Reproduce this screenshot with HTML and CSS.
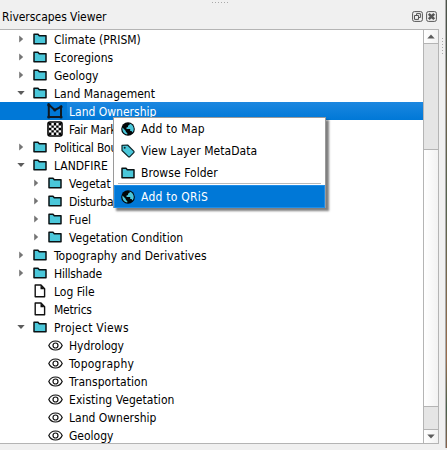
FILE: index.html
```
<!DOCTYPE html>
<html lang="en">
<head>
<meta charset="utf-8">
<title>Riverscapes Viewer</title>
<link rel="stylesheet" href="styles.css">
</head>
<body>
<svg class="defs" aria-hidden="true">
  <symbol id="folder" viewBox="0 0 14 12"><path d="M1 1.2H5L6.3 2.7H13V10.8H1Z" fill="#4ac7da" stroke="#0a1214" stroke-width="1.5" stroke-linejoin="round"/></symbol>
  <symbol id="right" viewBox="0 0 8 8"><path d="M2.2.5L6.2 4L2.2 7.5Z" fill="#757575"/></symbol>
  <symbol id="down" viewBox="0 0 8 5"><path d="M.3.5H7.7L4 4.5Z" fill="#5c5c5c"/></symbol>
  <symbol id="poly" viewBox="0 0 16 16"><path d="M1.8 1.8L7.8 7L14 3.8V14H1.8Z" fill="none" stroke="#101820" stroke-width="2"/><g fill="#101820"><circle cx="1.8" cy="1.9" r="1.6"/><circle cx="14" cy="3.8" r="1.6"/><circle cx="14" cy="14" r="1.6"/><circle cx="1.8" cy="14" r="1.6"/><circle cx="7.8" cy="7" r="1.5"/></g></symbol>
  <symbol id="raster" viewBox="0 0 16 16"><rect x="1" y="1" width="14" height="14" rx="2" fill="#fff" stroke="#000" stroke-width="1.6"/><path d="M2 2h2.4v2.4H2zM6.8 2h2.4v2.4H6.8zM11.6 2H14v2.4h-2.4zM4.4 4.4h2.4v2.4H4.4zM9.2 4.4h2.4v2.4H9.2zM2 6.8h2.4v2.4H2zM6.8 6.8h2.4v2.4H6.8zM11.6 6.8H14v2.4h-2.4zM4.4 9.2h2.4v2.4H4.4zM9.2 9.2h2.4v2.4H9.2zM2 11.6h2.4V14H2zM6.8 11.6h2.4V14H6.8zM11.6 11.6H14V14h-2.4z"/></symbol>
  <symbol id="file" viewBox="0 0 12 14"><path d="M1.2 1H7L10.6 4.7V12.8H1.2Z" fill="#fff" stroke="#111" stroke-width="1.4" stroke-linejoin="round"/><path d="M6.5 1V5.2H10.7Z" fill="#111"/></symbol>
  <symbol id="eye" viewBox="0 0 15 11"><path d="M.8 5.5C3.4-.5 11.6-.5 14.2 5.5C11.6 11.5 3.4 11.5.8 5.5Z" fill="none" stroke="#111" stroke-width="1.2"/><circle cx="7.5" cy="5.5" r="2.5" fill="none" stroke="#111" stroke-width="1.2"/></symbol>
  <symbol id="globe" viewBox="0 0 14 14"><circle cx="7" cy="7" r="6.8" fill="#020608"/><path d="M8.6 1.5L8.8 2.6L7 3.7V5L5.5 5.6V7H9.2V9H10.5L11.6 10.6C13 8.7 13.1 6.3 12 4.3C11.2 2.9 10 1.9 8.6 1.5ZM1.5 5.6L4.8 8.9V10L6.3 11V12.6C3 12.2.8 9 1.5 5.6Z" fill="#4ac7da"/></symbol>
  <symbol id="tag" viewBox="0 0 14 14"><path d="M1 1.3L6.6 1L13 7.4V8.3L8.6 12.9H7.6L1 6.5Z" fill="#4ac7da" stroke="#0c2428" stroke-width="1.2" stroke-linejoin="round"/><circle cx="3.7" cy="3.8" r="1" fill="#0c2428"/></symbol>
</svg>
<main class="window">
  <section class="dock">
    <header class="title"><h1>Riverscapes Viewer</h1>
      <svg class="btn" viewBox="0 0 11 11"><rect x=".6" y=".6" width="9.8" height="9.8" rx="1.8"/><path d="M4.6 4.4V2.6H8.4V6.5H6.6M2.5 4.5H6.5V8.4H2.5Z"/></svg>
      <svg class="btn" viewBox="0 0 11 11"><rect x=".6" y=".6" width="9.8" height="9.8" rx="1.8"/><path class="cross" d="M2.8 2.8L8.2 8.2M8.2 2.8L2.8 8.2"/></svg>
    </header>
    <div class="panel">
      <ul class="tree">
        <li><svg class="arrow"><use href="#right"/></svg><svg class="folder"><use href="#folder"/></svg><span>Climate (PRISM)</span></li>
        <li><svg class="arrow"><use href="#right"/></svg><svg class="folder"><use href="#folder"/></svg><span>Ecoregions</span></li>
        <li><svg class="arrow"><use href="#right"/></svg><svg class="folder"><use href="#folder"/></svg><span>Geology</span></li>
        <li><svg class="arrow"><use href="#down"/></svg><svg class="folder"><use href="#folder"/></svg><span>Land Management</span></li>
        <li class="child selected"><i class="arrow"></i><svg class="layer"><use href="#poly"/></svg><span>Land Ownership</span></li>
        <li class="child"><i class="arrow"></i><svg class="layer"><use href="#raster"/></svg><span class="tight">Fair Mark</span></li>
        <li><svg class="arrow"><use href="#right"/></svg><svg class="folder"><use href="#folder"/></svg><span class="tight">Political Bou</span></li>
        <li><svg class="arrow"><use href="#down"/></svg><svg class="folder"><use href="#folder"/></svg><span>LANDFIRE</span></li>
        <li class="child"><svg class="arrow"><use href="#right"/></svg><svg class="folder"><use href="#folder"/></svg><span>Vegetat</span></li>
        <li class="child"><svg class="arrow"><use href="#right"/></svg><svg class="folder"><use href="#folder"/></svg><span class="tight">Disturba</span></li>
        <li class="child"><svg class="arrow"><use href="#right"/></svg><svg class="folder"><use href="#folder"/></svg><span>Fuel</span></li>
        <li class="child"><svg class="arrow"><use href="#right"/></svg><svg class="folder"><use href="#folder"/></svg><span class="wide">Vegetation Condition</span></li>
        <li><svg class="arrow"><use href="#right"/></svg><svg class="folder"><use href="#folder"/></svg><span class="wide">Topography and Derivatives</span></li>
        <li><svg class="arrow"><use href="#right"/></svg><svg class="folder"><use href="#folder"/></svg><span class="tight">Hillshade</span></li>
        <li><i class="arrow"></i><svg class="file"><use href="#file"/></svg><span>Log File</span></li>
        <li><i class="arrow"></i><svg class="file"><use href="#file"/></svg><span class="tight">Metrics</span></li>
        <li><svg class="arrow"><use href="#down"/></svg><svg class="folder"><use href="#folder"/></svg><span class="views">Project Views</span></li>
        <li class="child"><i class="arrow"></i><svg class="eye"><use href="#eye"/></svg><span>Hydrology</span></li>
        <li class="child"><i class="arrow"></i><svg class="eye"><use href="#eye"/></svg><span class="views">Topography</span></li>
        <li class="child"><i class="arrow"></i><svg class="eye"><use href="#eye"/></svg><span class="wide">Transportation</span></li>
        <li class="child"><i class="arrow"></i><svg class="eye"><use href="#eye"/></svg><span class="wide">Existing Vegetation</span></li>
        <li class="child"><i class="arrow"></i><svg class="eye"><use href="#eye"/></svg><span>Land Ownership</span></li>
        <li class="child"><i class="arrow"></i><svg class="eye"><use href="#eye"/></svg><span>Geology</span></li>
      </ul>
      <div class="scrollbar">
        <div class="step"><svg class="flip"><use href="#down"/></svg></div>
        <div class="track"><div class="thumb"></div></div>
        <div class="step end"><svg><use href="#down"/></svg></div>
      </div>
    </div>
  </section>
  <div class="splitter"></div>
  <div class="canvas-edge"></div>
  <div class="handle"></div>
  <div class="menu">
    <div class="entry"><svg class="round"><use href="#globe"/></svg><span class="views">Add to Map</span></div>
    <div class="entry"><svg class="round"><use href="#tag"/></svg><span class="wide">View Layer MetaData</span></div>
    <div class="entry"><svg class="folder"><use href="#folder"/></svg><span class="wide">Browse Folder</span></div>
    <hr>
    <div class="entry active"><svg class="round"><use href="#globe"/></svg><span class="views">Add to QRiS</span></div>
  </div>
</main>
</body>
</html>
```
FILE: styles.css
```
* { box-sizing: border-box; }
body { margin: 0; background: #f0f0f0; color: #000; font: 12px/18px "DejaVu Sans Condensed", "DejaVu Sans", sans-serif; font-stretch: condensed; }
.defs { position: absolute; width: 0; height: 0; }
.window { position: relative; display: flex; width: 447px; height: 450px; overflow: hidden; }
.dock { width: 439px; display: flex; flex-direction: column; }
.title { height: 29px; display: flex; align-items: center; padding: 3px 2px 0 2px; }
.title h1 { margin: 0; padding-top: 2px; flex: 1; font: inherit; letter-spacing: -.05px; }
.btn { width: 11px; height: 11px; margin-left: 3px; fill: none; stroke: #555; stroke-width: 1; }
.cross { stroke-width: 2.6; }
.panel { height: 415px; display: flex; border: 1px solid #b4b4b4; border-left: 0; background: #fff; }
.tree { list-style: none; margin: 0; padding: 0; flex: 1; overflow: hidden; }
.tree li { height: 18px; display: flex; align-items: center; padding-left: 17px; white-space: nowrap; }
.tree .child { padding-left: 32px; }
.tree span { height: 18px; line-height: 20px; }
.tight { letter-spacing: -.2px; }
.wide { letter-spacing: .06px; }
.views { letter-spacing: .25px; }
.tree svg, .menu svg { flex: none; }
.tree .arrow { width: 8px; height: 8px; flex: none; }
.tree .folder { width: 14px; height: 12px; margin: 0 7px 0 8px; }
.tree .layer { width: 16px; height: 16px; margin: 0 6px 0 7px; }
.tree .file { width: 12px; height: 14px; margin: 0 8px 0 9px; }
.tree .eye { width: 15px; height: 11px; margin: 0 6px 0 8px; }
.tree .selected { color: #fff; background: linear-gradient(90deg, #0078d7 67px, transparent 67px), linear-gradient(#1c87e0, #0078d7); }
.scrollbar { width: 15px; display: flex; flex-direction: column; border-left: 1px solid #b4b4b4; }
.step { height: 14px; display: flex; align-items: center; justify-content: center; border-bottom: 1px solid #b4b4b4; background: linear-gradient(90deg, #fff, #f2f2f2); }
.step.end { border-bottom: 0; border-top: 1px solid #b4b4b4; }
.step svg { width: 8px; height: 5px; }
.flip { transform: rotate(180deg); }
.track { flex: 1; background: #e5e5e5; padding-top: 105px; }
.thumb { height: 258px; border: solid #b4b4b4; border-width: 1px 0; background: linear-gradient(90deg, #fff, #f2f2f2); }
.splitter { width: 6px; padding: 38px 0 0 3px; }
.splitter::before { content: ""; display: block; width: 1px; height: 16px; background: repeating-linear-gradient(#aaa 0 1px, transparent 1px 3px); }
.canvas-edge { width: 2px; height: 448px; border-left: 1px solid #aaa; background: linear-gradient(#4c5449 0 12%, #71614b 20%, #56634e 45%, #9b6d4b 80%, #49604b 91%, #89634b); }
.handle { position: absolute; left: 212px; top: 2px; width: 16px; height: 1px; background: repeating-linear-gradient(90deg, #aaa 0 1px, transparent 1px 3px); }
.menu { position: absolute; left: 113px; top: 117px; width: 213px; height: 91px; border: 1px solid #9a9a9a; background: #fff; box-shadow: 3px 3px 2px rgba(0,0,0,.5); }
.entry { height: 22px; display: flex; align-items: center; gap: 6px; padding-left: 7px; white-space: nowrap; }
.entry .round { width: 14px; height: 14px; }
.entry .folder { width: 14px; height: 12px; }
.menu hr { height: 1px; margin: -1px 4px 1px; border: 0; background: #bababa; }
.active { height: 23px; color: #fff; background: #0078d7; box-shadow: inset 0 0 0 1px #1e8de8; }
```
